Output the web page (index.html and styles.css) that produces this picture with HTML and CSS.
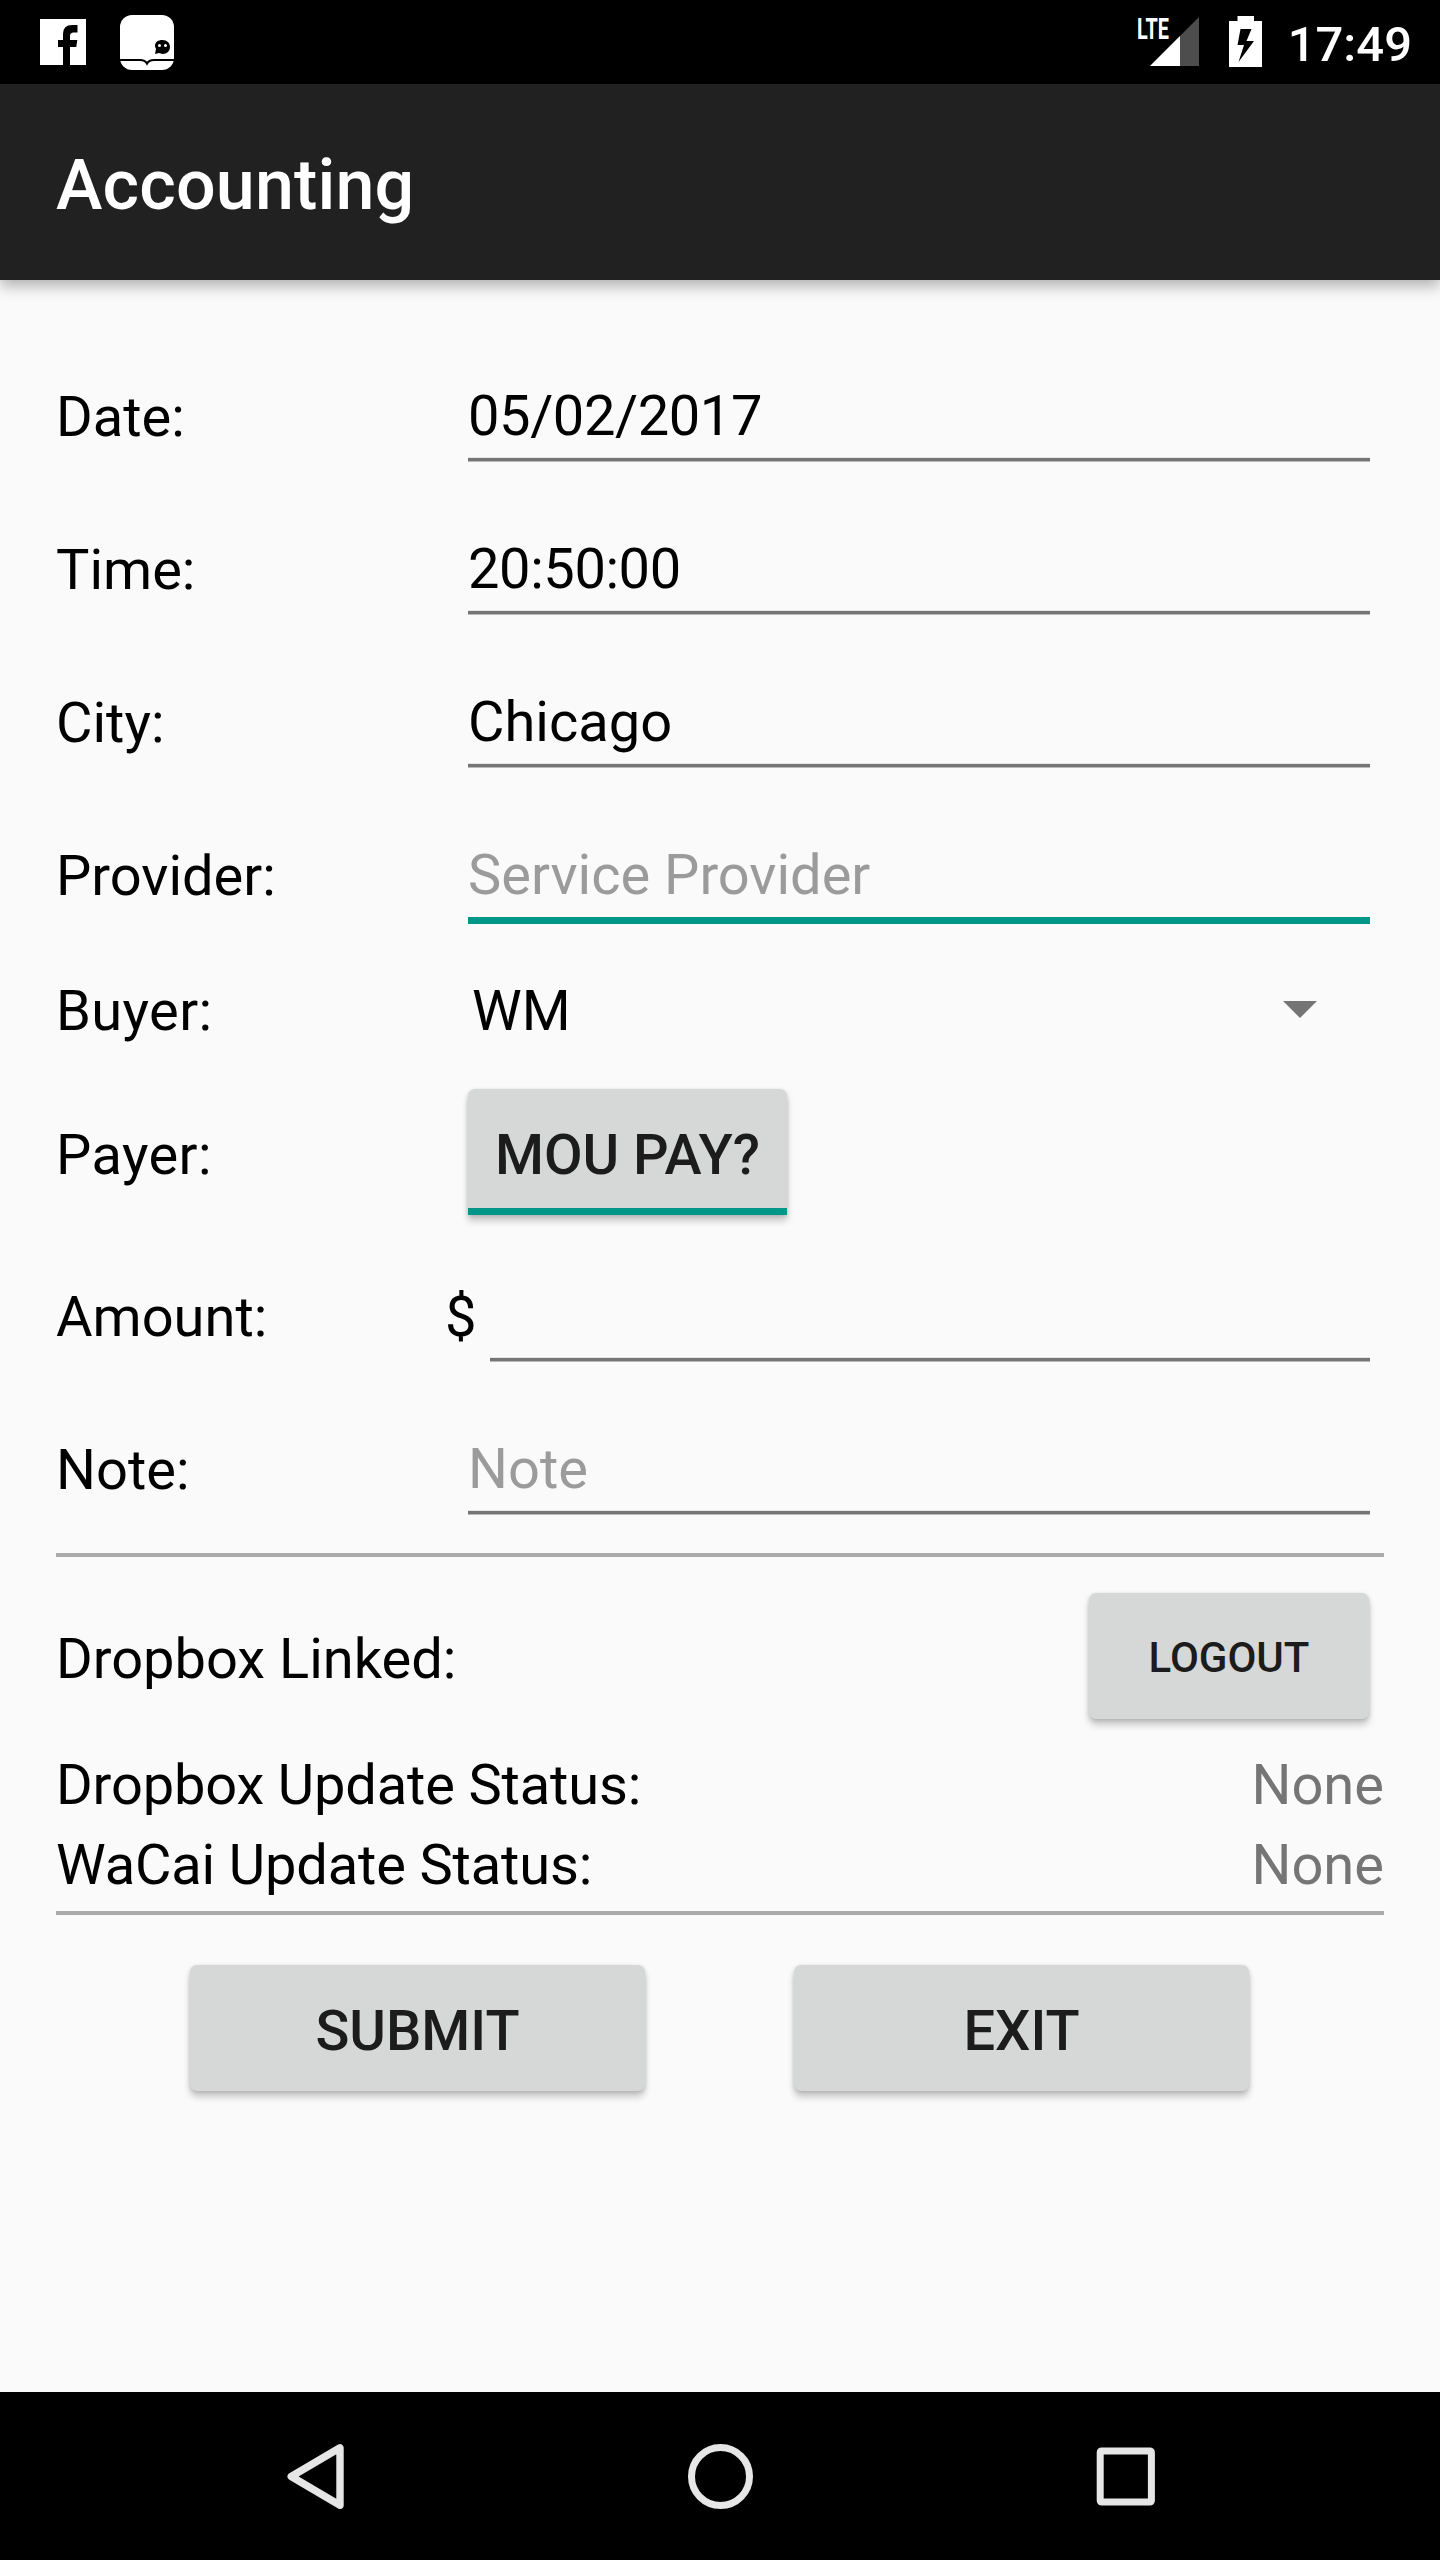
FILE: index.html
```html
<!DOCTYPE html>
<html lang="en">
<head>
<meta charset="utf-8">
<title>Accounting</title>
<link rel="stylesheet" href="styles.css">
</head>
<body>
<div class="screen">
  <div class="status-bar">
    <svg class="icon-facebook" width="46" height="46" viewBox="0 0 46 46"><path fill="#fff" fill-rule="evenodd" d="M0 0H46V46H30V28H36.300L37.300 21H30V17Q30 13.500 33.500 13.500H37.500V6H32Q23 6 23 15V21H18V28H23V46H0Z"/></svg>
    <svg class="icon-reader" width="54" height="55" viewBox="0 0 54 55">
      <rect width="54" height="55" rx="12" fill="#fff"/>
      <path fill="none" stroke="#000" stroke-width="2.200" d="M0 45H20Q25 45 27 48.500Q29 45 34 45H54"/>
      <path d="M35 39L36 34Q35 32 35 31C35 27 38 25 42.500 25C47 25 50 28 50 32C50 36 47 39 42.500 39L39 38Z"/>
      <circle cx="39.500" cy="30.500" r="1.500" fill="#fff"/><circle cx="45.500" cy="30.500" r="1.500" fill="#fff"/>
    </svg>
    <span class="spacer"></span>
    <div class="signal">
      <svg width="49" height="49" viewBox="0 0 49 49"><path fill="#4d4d4d" d="M49 0V49H0Z"/><path fill="#fff" d="M30 19V49H0Z"/></svg>
      <span class="lte">LTE</span>
    </div>
    <svg class="icon-battery" width="33" height="51" viewBox="0 0 33 51"><path fill="#fff" fill-rule="evenodd" d="M8.500 0H25V5H33V51H0V5H8.500ZM11.500 13L8.500 29H15L9.500 46L25 25H17.500L22.500 13Z"/></svg>
    <span class="clock">17:49</span>
  </div>
  <header class="app-bar"><h1>Accounting</h1></header>

  <main class="content">
    <div class="row"><span class="label">Date:</span><div class="field digits">05/02/2017</div></div>
    <div class="row"><span class="label">Time:</span><div class="field digits">20:50:00</div></div>
    <div class="row"><span class="label">City:</span><div class="field">Chicago</div></div>
    <div class="row"><span class="label">Provider:</span><div class="field hint focused">Service Provider</div></div>
    <div class="row row-buyer"><span class="label">Buyer:</span>
      <div class="spinner"><span>WM</span><svg width="34" height="17" viewBox="0 0 34 17"><path fill="#757575" d="M0 0H34L17 17Z"/></svg></div>
    </div>
    <div class="row row-payer"><span class="label">Payer:</span><div class="button toggle">MOU PAY?</div></div>
    <div class="row"><span class="label label-amount">Amount:</span><span class="currency">$</span><div class="field"></div></div>
    <div class="row"><span class="label">Note:</span><div class="field hint">Note</div></div>
    <div class="divider divider-top"></div>
    <div class="row-linked"><span>Dropbox Linked:</span><div class="button logout">LOGOUT</div></div>
    <div class="row-status"><span>Dropbox Update Status:</span><span class="value">None</span></div>
    <div class="row-status"><span>WaCai Update Status:</span><span class="value">None</span></div>
    <div class="divider divider-bottom"></div>
    <div class="actions"><div class="button action">SUBMIT</div><div class="button action">EXIT</div></div>
  </main>

  <nav class="nav-bar">
    <svg width="67" height="70" viewBox="0 0 67 70"><path fill="none" stroke="#e6e6e6" stroke-width="7.400" stroke-linejoin="round" d="M57 6.800V64.200L8.200 35.500Z"/></svg>
    <svg width="70" height="70" viewBox="0 0 70 70"><circle cx="35.500" cy="35.500" r="29" fill="none" stroke="#e6e6e6" stroke-width="7"/></svg>
    <svg width="70" height="70" viewBox="0 0 70 70"><rect x="10.200" y="9.900" width="51.200" height="51.200" rx="1.500" fill="none" stroke="#e6e6e6" stroke-width="7"/></svg>
  </nav>
</div>
</body>
</html>
```
FILE: styles.css
```css
* { box-sizing: border-box; }

body {
  margin: 0;
  background: #fafafa;
  font-family: Roboto, sans-serif;
  font-size: 56px;
  line-height: 66px;
  color: #000;
}

.screen {
  display: flex;
  flex-direction: column;
  width: 1440px;
  height: 2560px;
}

.status-bar {
  display: flex;
  align-items: flex-start;
  flex: none;
  height: 84px;
  padding: 0 28px 0 40px;
  background: #000;
  color: #fff;
}
.status-bar svg { display: block; flex: none; }
.status-bar .icon-facebook { margin-top: 19px; }
.status-bar .icon-reader { margin: 15px 0 0 34px; }
.spacer { flex: 1; }

.signal { position: relative; margin: 17px 30px 0 0; }
.lte {
  position: absolute;
  left: -13px;
  top: 0;
  font-size: 30px;
  line-height: 24px;
  font-weight: 700;
  transform: scaleX(0.66);
  transform-origin: 0 50%;
}
.status-bar .icon-battery { margin: 16px 26px 0 0; }
.clock {
  font-size: 49px;
  font-weight: 500;
  line-height: 58px;
  margin-top: 16px;
}

.app-bar {
  flex: none;
  display: flex;
  align-items: center;
  height: 196px;
  padding: 5px 56px 0;
  background: #212121;
  color: #fff;
  box-shadow: 0 6px 14px rgba(0, 0, 0, 0.3);
}
h1 {
  margin: 0;
  font-size: 70px;
  line-height: 82px;
  font-weight: 500;
  letter-spacing: 0.15px;
}

.content { flex: 1; padding: 59px 56px 0; }

.row { display: flex; height: 153px; }
.label { flex: none; width: 412px; padding-top: 13px; margin-top: 32px; }
.label-amount { width: 390px; }
.currency { width: 44px; padding-top: 45px; text-indent: -1px; }
.field {
  flex: 1;
  height: 90px;
  margin: 32px 14px 0 0;
  padding-top: 12px;
  border-bottom: 3px solid #757575;
  box-shadow: 0 1px 0 #b9b9b9, inset 0 -1px 0 #e6e6e6;
}
.digits { letter-spacing: -0.4px; }
.hint { color: #9b9b9b; }
.focused { height: 94px; border-bottom: 7px solid #009688; box-shadow: none; }

.row-buyer { height: 118px; }
.row-buyer .label { margin-top: 14px; letter-spacing: 0.4px; }
.spinner {
  flex: 1;
  display: flex;
  justify-content: space-between;
  padding: 27px 67px 0 4px;
}
.spinner svg { margin-top: 23px; }

.row-payer { height: 170px; }
.row-payer .label { margin-top: 40px; letter-spacing: 0.4px; }

.button {
  display: flex;
  align-items: center;
  justify-content: center;
  height: 126px;
  padding-top: 5px;
  background: #d6d7d7;
  border-radius: 7px;
  color: #1c1c1c;
  font-weight: 500;
  box-shadow: 0 6px 7px rgba(0, 0, 0, 0.2), 0 1px 4px rgba(0, 0, 0, 0.14);
}
.toggle {
  width: 319px;
  margin-top: 20px;
  padding-top: 12px;
  border-bottom: 7px solid #009688;
  border-radius: 7px 7px 0 0;
}

.divider { height: 4px; background: #aaa; }
.divider-top { margin-top: 8px; }
.row-linked {
  display: flex;
  justify-content: space-between;
  height: 195px;
  padding: 36px 15px 0 0;
}
.row-linked span { padding-top: 33px; }
.row-linked .logout { width: 280px; padding-top: 4px; font-size: 42px; }

.row-status {
  display: flex;
  justify-content: space-between;
  height: 80px;
  letter-spacing: -0.15px;
}
.value { color: #757575; letter-spacing: 0; }
.divider-bottom { margin-top: -1px; }

.actions {
  display: flex;
  justify-content: space-between;
  padding: 50px 135px 0 134px;
}
.action { width: 455px; }

.nav-bar {
  flex: none;
  display: flex;
  justify-content: space-between;
  align-items: center;
  height: 168px;
  padding: 0 280px 0 283px;
  background: #000;
}
```
